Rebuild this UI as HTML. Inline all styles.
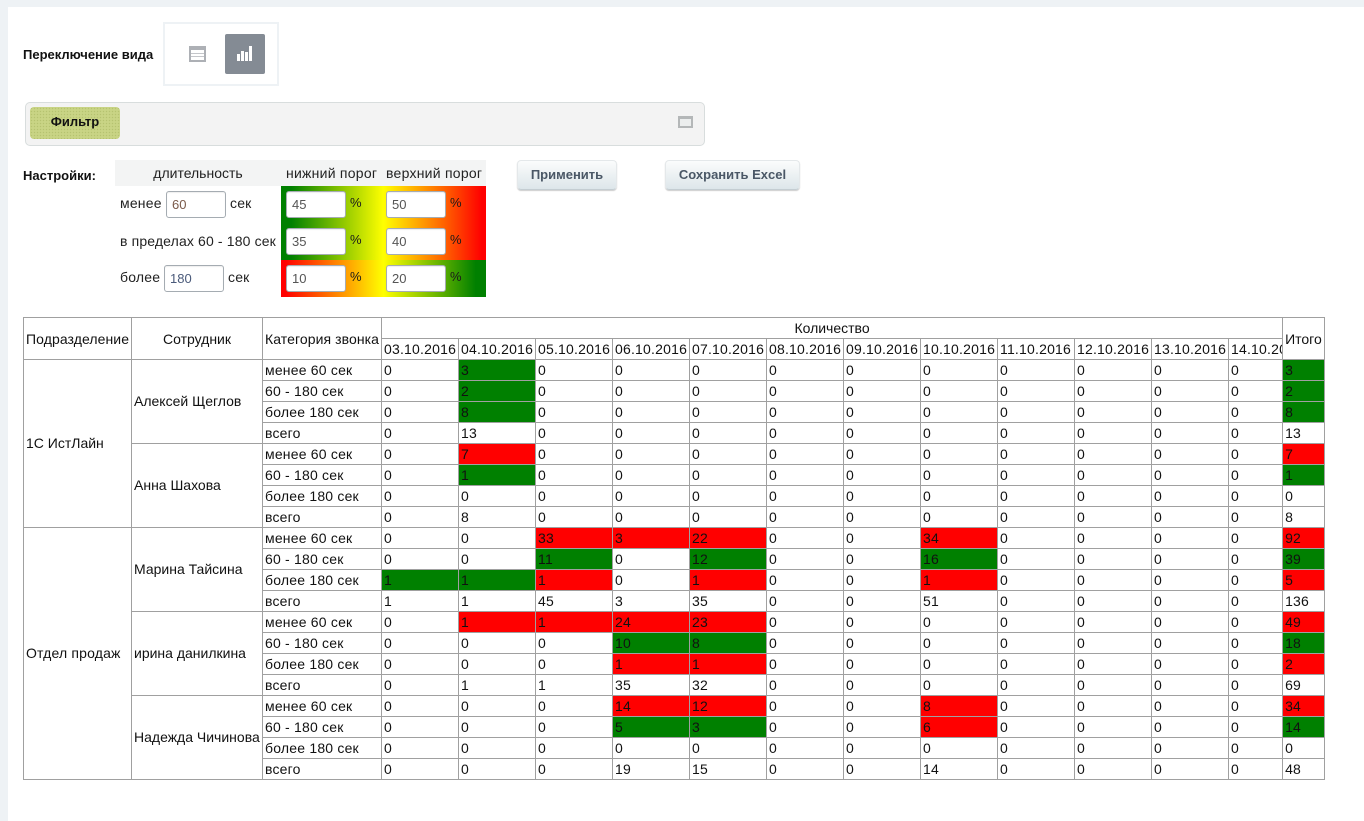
<!DOCTYPE html>
<html lang="ru">
<head>
<meta charset="utf-8">
<title>Отчет</title>
<style>
html,body{margin:0;padding:0;width:1364px;height:821px;overflow:hidden;background:#fff;font-family:"Liberation Sans",Arial,sans-serif;color:#000}
#bgt{position:absolute;left:0;top:0;width:1364px;height:7px;background:#eef2f5}
#bgl{position:absolute;left:0;top:0;width:8px;height:821px;background:#eef2f5}
.a{position:absolute;white-space:nowrap}
.t{font-size:14px;line-height:16px;color:#222;letter-spacing:.2px}
.p{position:absolute;font-size:13px;line-height:16px;color:#1a1a1a;white-space:nowrap}
.b{font-weight:bold;font-size:13px;line-height:14px;color:#111}
.inp{position:absolute;box-sizing:border-box;width:60px;height:27px;background:#fff;border:1px solid #a5acb2;border-radius:3px;font-size:13px;line-height:25px;padding-left:5px;color:#555;box-shadow:inset 0 1px 1px #eee}
.btn{position:absolute;box-sizing:border-box;height:30px;top:160px;border:1px solid #e4e8ea;border-bottom:1px solid #c4cdd2;border-radius:4px;background:linear-gradient(#fbfcfc,#dde6ea);font-weight:bold;font-size:13px;line-height:28px;text-align:center;color:#4a5766;box-shadow:0 1px 1px #ccc}
#tb{position:absolute;left:23px;top:317px;width:1302px;border-collapse:collapse;table-layout:fixed;font-size:14px;letter-spacing:.2px}
#tb td{border:1px solid #a0a0a0;padding:0 0 0 2px;line-height:16px;height:20px;white-space:nowrap;overflow:hidden;vertical-align:middle;color:#111}
#tb td.c{text-align:center;padding:0;letter-spacing:0}
#tb td.n{letter-spacing:0;padding-bottom:2px}
#tb td.g{background:#008000}
#tb td.r{background:#ff0000}
</style>
</head>
<body>
<div id="bgt"></div><div id="bgl"></div>

<div class="a b" style="left:23px;top:48px">Переключение вида</div>
<div class="a" style="left:163px;top:22px;width:116px;height:64px;box-sizing:border-box;border:2px solid #eef2f5"></div>
<svg class="a" style="left:189px;top:46px" width="17" height="16" viewBox="0 0 17 16"><rect width="17" height="16" fill="#adb0b5"/><rect x="2" y="4" width="13" height="10" fill="#fff"/><rect x="2" y="7" width="13" height="1" fill="#c4c6ca"/><rect x="2" y="10" width="13" height="1" fill="#c4c6ca"/></svg>
<div class="a" style="left:225px;top:34px;width:40px;height:40px;background:#848b94;border-radius:2px"></div>
<svg class="a" style="left:237px;top:46px" width="16" height="16" viewBox="0 0 16 16"><rect x="0" y="8" width="3" height="7" fill="#fff"/><rect x="4" y="5" width="3" height="10" fill="#fff"/><rect x="8" y="6" width="3" height="9" fill="#fff"/><rect x="12" y="0" width="3" height="15" fill="#fff"/></svg>

<div class="a" style="left:25px;top:102px;width:680px;height:44px;box-sizing:border-box;background:#f3f3f3;border:1px solid #d8dddd;border-radius:5px"></div>
<div class="a" style="left:30px;top:107px;width:90px;height:32px;border-radius:4px;background-color:#c9d485;background-image:radial-gradient(#b6c270 30%,transparent 40%);background-size:3px 3px;text-align:center;font-weight:bold;font-size:13px;line-height:29px;color:#111">Фильтр</div>
<div class="a" style="left:678px;top:116px;width:15px;height:12px;box-sizing:border-box;border:2px solid #b4b7b8;border-top-width:3px;background:#eceeee"></div>

<div class="a b" style="left:23px;top:169px">Настройки:</div>
<div class="a" style="left:115px;top:160px;width:371px;height:26px;background:#f3f4f4"></div>
<div class="a t" style="left:115px;top:165px;width:166px;text-align:center;letter-spacing:0">длительность</div>
<div class="a t" style="left:286px;top:165px;letter-spacing:.25px">нижний порог</div>
<div class="a t" style="left:386px;top:165px;letter-spacing:.25px">верхний порог</div>

<div class="a" style="left:281px;top:186px;width:205px;height:74px;background:linear-gradient(90deg,#008000 5%,#ffff00 50%,#ff0000 98%)"></div>
<div class="a" style="left:281px;top:260px;width:205px;height:37px;background:linear-gradient(90deg,#ff0000 2%,#ffff00 50%,#008000 95%)"></div>

<div class="a t" style="left:120px;top:195px">менее</div>
<div class="inp" style="left:166px;top:191px;color:#7a5a4a">60</div>
<div class="a t" style="left:230px;top:195px">сек</div>
<div class="a t" style="left:120px;top:233px;letter-spacing:.14px">в пределах 60 - 180 сек</div>
<div class="a t" style="left:120px;top:269px">более</div>
<div class="inp" style="left:164px;top:265px;color:#4a5a7a">180</div>
<div class="a t" style="left:228px;top:269px">сек</div>

<div class="inp" style="left:286px;top:191px">45</div><div class="p" style="left:350px;top:195px">%</div>
<div class="inp" style="left:386px;top:191px">50</div><div class="p" style="left:450px;top:195px">%</div>
<div class="inp" style="left:286px;top:228px">35</div><div class="p" style="left:350px;top:232px">%</div>
<div class="inp" style="left:386px;top:228px">40</div><div class="p" style="left:450px;top:232px">%</div>
<div class="inp" style="left:286px;top:265px">10</div><div class="p" style="left:350px;top:269px">%</div>
<div class="inp" style="left:386px;top:265px">20</div><div class="p" style="left:450px;top:269px">%</div>

<div class="btn" style="left:517px;width:100px">Применить</div>
<div class="btn" style="left:665px;width:135px">Сохранить Excel</div>

<table id="tb">
<colgroup><col style="width:108px"><col style="width:131px"><col style="width:119px"><col style="width:77px"><col style="width:77px"><col style="width:77px"><col style="width:77px"><col style="width:77px"><col style="width:77px"><col style="width:77px"><col style="width:77px"><col style="width:77px"><col style="width:77px"><col style="width:77px"><col style="width:54px"><col style="width:42px"></colgroup>
<tr>
<td class="c" rowspan="2" style="text-align:left;padding-left:2px;letter-spacing:.08px">Подразделение</td><td class="c" rowspan="2">Сотрудник</td><td rowspan="2" style="letter-spacing:.08px">Категория звонка</td><td class="c" colspan="12">Количество</td><td rowspan="2" style="letter-spacing:0">Итого</td>
</tr>
<tr style="height:20px">
<td>03.10.2016</td><td>04.10.2016</td><td>05.10.2016</td><td>06.10.2016</td><td>07.10.2016</td><td>08.10.2016</td><td>09.10.2016</td><td>10.10.2016</td><td>11.10.2016</td><td>12.10.2016</td><td>13.10.2016</td><td>14.10.2016</td>
</tr>
<tr><td class="n" rowspan="8">1С ИстЛайн</td><td class="n" rowspan="4">Алексей Щеглов</td><td>менее 60 сек</td><td>0</td><td class="g">3</td><td>0</td><td>0</td><td>0</td><td>0</td><td>0</td><td>0</td><td>0</td><td>0</td><td>0</td><td>0</td><td class="g">3</td></tr>
<tr><td>60 - 180 сек</td><td>0</td><td class="g">2</td><td>0</td><td>0</td><td>0</td><td>0</td><td>0</td><td>0</td><td>0</td><td>0</td><td>0</td><td>0</td><td class="g">2</td></tr>
<tr><td>более 180 сек</td><td>0</td><td class="g">8</td><td>0</td><td>0</td><td>0</td><td>0</td><td>0</td><td>0</td><td>0</td><td>0</td><td>0</td><td>0</td><td class="g">8</td></tr>
<tr><td>всего</td><td>0</td><td>13</td><td>0</td><td>0</td><td>0</td><td>0</td><td>0</td><td>0</td><td>0</td><td>0</td><td>0</td><td>0</td><td>13</td></tr>
<tr><td class="n" rowspan="4">Анна Шахова</td><td>менее 60 сек</td><td>0</td><td class="r">7</td><td>0</td><td>0</td><td>0</td><td>0</td><td>0</td><td>0</td><td>0</td><td>0</td><td>0</td><td>0</td><td class="r">7</td></tr>
<tr><td>60 - 180 сек</td><td>0</td><td class="g">1</td><td>0</td><td>0</td><td>0</td><td>0</td><td>0</td><td>0</td><td>0</td><td>0</td><td>0</td><td>0</td><td class="g">1</td></tr>
<tr><td>более 180 сек</td><td>0</td><td>0</td><td>0</td><td>0</td><td>0</td><td>0</td><td>0</td><td>0</td><td>0</td><td>0</td><td>0</td><td>0</td><td>0</td></tr>
<tr><td>всего</td><td>0</td><td>8</td><td>0</td><td>0</td><td>0</td><td>0</td><td>0</td><td>0</td><td>0</td><td>0</td><td>0</td><td>0</td><td>8</td></tr>
<tr><td class="n" rowspan="12" style="letter-spacing:.17px">Отдел продаж</td><td class="n" rowspan="4">Марина Тайсина</td><td>менее 60 сек</td><td>0</td><td>0</td><td class="r">33</td><td class="r">3</td><td class="r">22</td><td>0</td><td>0</td><td class="r">34</td><td>0</td><td>0</td><td>0</td><td>0</td><td class="r">92</td></tr>
<tr><td>60 - 180 сек</td><td>0</td><td>0</td><td class="g">11</td><td>0</td><td class="g">12</td><td>0</td><td>0</td><td class="g">16</td><td>0</td><td>0</td><td>0</td><td>0</td><td class="g">39</td></tr>
<tr><td>более 180 сек</td><td class="g">1</td><td class="g">1</td><td class="r">1</td><td>0</td><td class="r">1</td><td>0</td><td>0</td><td class="r">1</td><td>0</td><td>0</td><td>0</td><td>0</td><td class="r">5</td></tr>
<tr><td>всего</td><td>1</td><td>1</td><td>45</td><td>3</td><td>35</td><td>0</td><td>0</td><td>51</td><td>0</td><td>0</td><td>0</td><td>0</td><td>136</td></tr>
<tr><td class="n" rowspan="4">ирина данилкина</td><td>менее 60 сек</td><td>0</td><td class="r">1</td><td class="r">1</td><td class="r">24</td><td class="r">23</td><td>0</td><td>0</td><td>0</td><td>0</td><td>0</td><td>0</td><td>0</td><td class="r">49</td></tr>
<tr><td>60 - 180 сек</td><td>0</td><td>0</td><td>0</td><td class="g">10</td><td class="g">8</td><td>0</td><td>0</td><td>0</td><td>0</td><td>0</td><td>0</td><td>0</td><td class="g">18</td></tr>
<tr><td>более 180 сек</td><td>0</td><td>0</td><td>0</td><td class="r">1</td><td class="r">1</td><td>0</td><td>0</td><td>0</td><td>0</td><td>0</td><td>0</td><td>0</td><td class="r">2</td></tr>
<tr><td>всего</td><td>0</td><td>1</td><td>1</td><td>35</td><td>32</td><td>0</td><td>0</td><td>0</td><td>0</td><td>0</td><td>0</td><td>0</td><td>69</td></tr>
<tr><td class="n" rowspan="4">Надежда Чичинова</td><td>менее 60 сек</td><td>0</td><td>0</td><td>0</td><td class="r">14</td><td class="r">12</td><td>0</td><td>0</td><td class="r">8</td><td>0</td><td>0</td><td>0</td><td>0</td><td class="r">34</td></tr>
<tr><td>60 - 180 сек</td><td>0</td><td>0</td><td>0</td><td class="g">5</td><td class="g">3</td><td>0</td><td>0</td><td class="r">6</td><td>0</td><td>0</td><td>0</td><td>0</td><td class="g">14</td></tr>
<tr><td>более 180 сек</td><td>0</td><td>0</td><td>0</td><td>0</td><td>0</td><td>0</td><td>0</td><td>0</td><td>0</td><td>0</td><td>0</td><td>0</td><td>0</td></tr>
<tr><td>всего</td><td>0</td><td>0</td><td>0</td><td>19</td><td>15</td><td>0</td><td>0</td><td>14</td><td>0</td><td>0</td><td>0</td><td>0</td><td>48</td></tr>
</table>
</body>
</html>
